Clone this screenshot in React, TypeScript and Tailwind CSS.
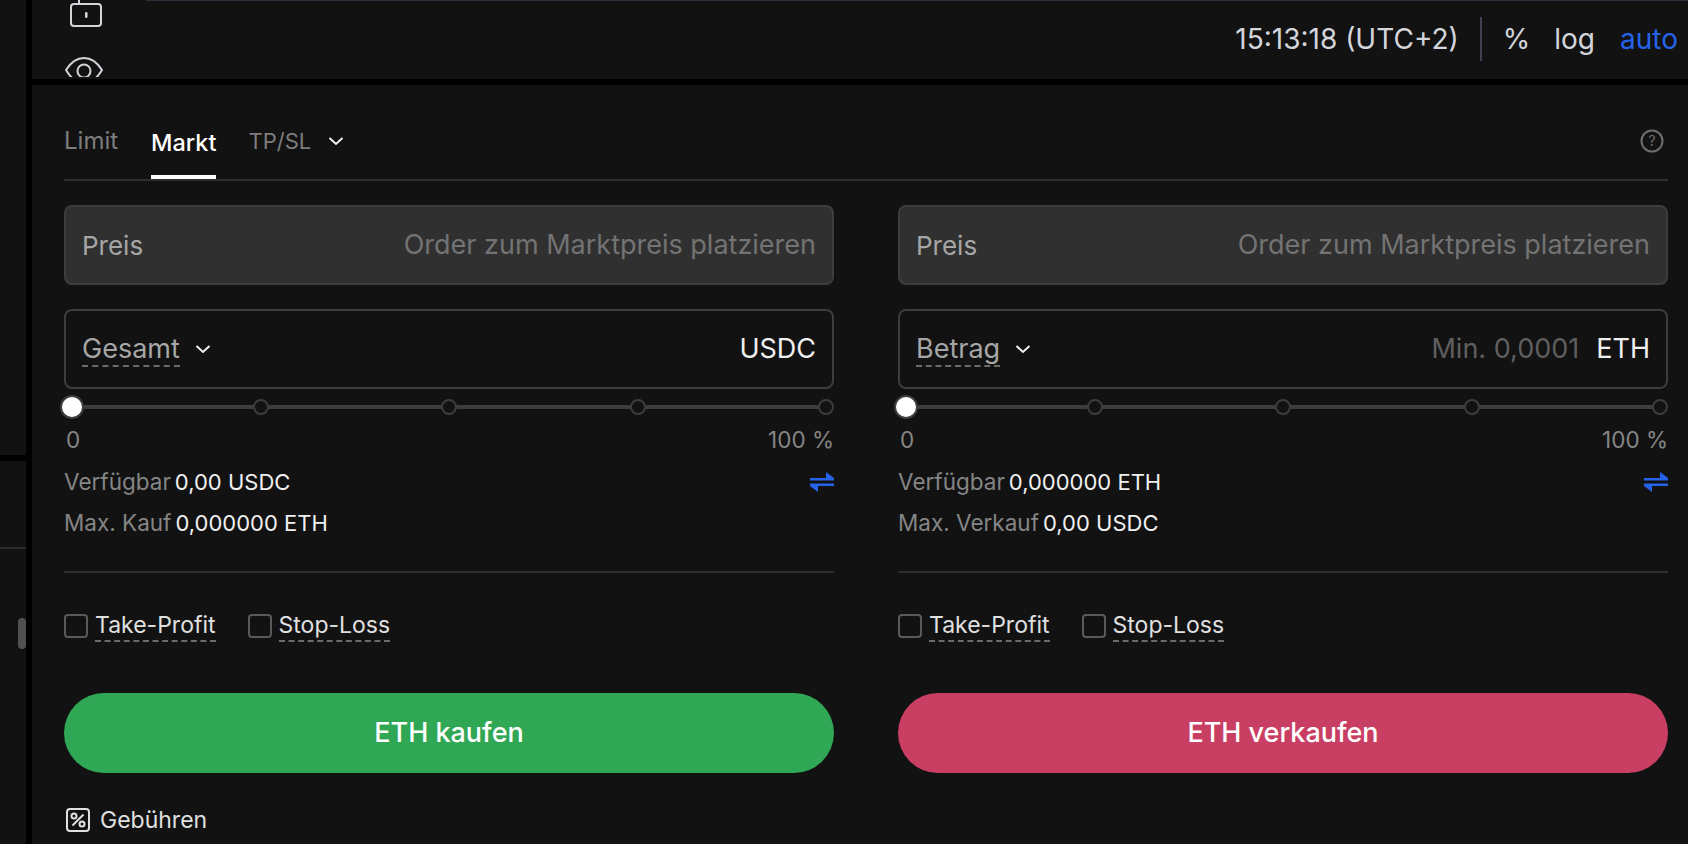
const font = { fontFamily: 'Inter, sans-serif' };

const Chevron = () => (
  <svg width="16" height="10" viewBox="0 0 16 10" fill="none" className="shrink-0">
    <path d="M1.5 2 L8 8 L14.5 2" stroke="#f0f0f0" strokeWidth="2" />
  </svg>
);

const Slider = () => (
  <div className="relative h-[22px] mt-[7px] px-2 flex justify-between items-center">
    <div className="absolute left-2 right-2 top-[9px] h-1 bg-[#3d3d3d]" />
    <div className="relative w-0 flex justify-center">
      <div className="w-6 h-6 shrink-0 rounded-full bg-white border-2 border-[#3d3d3d]" />
    </div>
    {[1, 2, 3, 4].map((i) => (
      <div key={i} className="relative w-0 flex justify-center">
        <div className="w-4 h-4 shrink-0 rounded-full bg-[#121212] border-2 border-[#3d3d3d]" />
      </div>
    ))}
  </div>
);

const Check = ({ label }: { label: string }) => (
  <div className="flex items-center gap-[7px]">
    <div className="w-6 h-6 rounded-[4px] border-2 border-[#5a5a5a]" />
    <span className="text-[#e0e0e0] text-[23px] leading-[30px] border-b-2 border-dashed border-[#6b6b6b]">{label}</span>
  </div>
);

const OrderColumn = ({
  field,
  unit,
  hint,
  avail,
  maxLabel,
  maxValue,
  action,
  color,
}: {
  field: string;
  unit: string;
  hint?: string;
  avail: string;
  maxLabel: string;
  maxValue: string;
  action: string;
  color: string;
}) => (
  <div className="w-[770px] flex flex-col">
    <div className="h-[80px] rounded-lg bg-[#303030] border-2 border-[#3d3d3d] px-[16px] flex items-center justify-between text-[27px]">
      <span className="text-[#a6a6a6] text-[26px]">Preis</span>
      <span className="text-[#737373]">Order zum Marktpreis platzieren</span>
    </div>
    <div className="h-[80px] mt-[24px] rounded-lg border-2 border-[#3d3d3d] px-[16px] flex items-center justify-between text-[27px]">
      <div className="flex items-center gap-[15px]">
        <span className="text-[#a6a6a6] leading-[33px] border-b-2 border-dashed border-[#6b6b6b]">{field}</span>
        <Chevron />
      </div>
      <div className="flex items-center gap-[17px]">
        {hint && <span className="text-[#5f5f5f]">{hint}</span>}
        <span className="text-[#f0f0f0]">{unit}</span>
      </div>
    </div>
    <Slider />
    <div className="flex justify-between mt-[7px] pl-[2px] text-[22.5px] leading-[30px] text-[#858585]">
      <span>0</span>
      <span>100 %</span>
    </div>
    <div className="flex items-center justify-between mt-[12px] text-[22.5px] leading-[30px]">
      <div className="flex items-baseline gap-[4px]">
        <span className="text-[#858585]">Verfügbar</span>
        <span className="text-[#f0f0f0] text-[22px]">{avail}</span>
      </div>
      <svg width="24" height="20" viewBox="0 0 24 20" fill="#2563eb">
        <path d="M0 6h24v2.4H0zM16 0l8 6h-8zM0 11.6h24V14H0zM8 20l-8-6h8z" />
      </svg>
    </div>
    <div className="flex items-baseline gap-[4px] mt-[11px] text-[22.5px] leading-[30px]">
      <span className="text-[#858585]">{maxLabel}</span>
      <span className="text-[#f0f0f0] text-[22px]">{maxValue}</span>
    </div>
    <div className="h-[2px] bg-[#2e2e2e] mt-[33px]" />
    <div className="flex gap-[32px] mt-[37px]">
      <Check label="Take-Profit" />
      <Check label="Stop-Loss" />
    </div>
    <button className={`h-[80px] mt-[51px] rounded-full text-white text-[27px] font-medium ${color}`}>{action}</button>
  </div>
);

export default function App() {
  return (
    <div className="w-[1688px] h-[844px] bg-black flex overflow-hidden" style={font}>
      <div className="w-[26px] h-full mr-[6px] flex flex-col gap-[6px]">
        <div className="h-[455px] bg-[#121212]" />
        <div className="flex-1 bg-[#121212] relative">
          <div className="h-[2px] mt-[86px] bg-[#2a2a2a]" />
          <div className="absolute left-[18px] top-[157px] w-2 h-[31px] rounded bg-[#505050]" />
        </div>
      </div>
      <div className="flex-1 flex flex-col gap-[6px]">
        <div className="h-[79px] bg-[#121212] flex overflow-hidden">
          <div className="w-[114px] h-[77px] overflow-hidden pl-[33px] flex flex-col items-start">
            <svg width="40" height="27" viewBox="0 0 40 27" fill="none" stroke="#d4d6dc" strokeWidth="2" className="shrink-0">
              <path d="M14 0v3" />
              <rect x="6" y="4" width="30" height="22" rx="3" />
              <rect x="20" y="12" width="2.5" height="6" rx="1.2" fill="#d4d6dc" stroke="none" />
            </svg>
            <svg width="40" height="30" viewBox="0 0 40 30" fill="none" stroke="#d4d6dc" strokeWidth="2" className="shrink-0 mt-[29px]">
              <path d="M1 14 C6 6 12 2 19 2 C26 2 32 6 37 14 C32 22 26 28 19 28 C12 28 6 22 1 14Z" />
              <circle cx="19" cy="15" r="6.5" />
            </svg>
          </div>
          <div className="flex-1 flex flex-col">
            <div className="h-[1px] bg-[#2a2d3a]" />
            <div className="flex-1 flex items-center justify-end pr-[10px] pb-[2px] text-[28px] text-[#d4d6dc]">
              <span>15:13:18 (UTC+2)</span>
              <div className="w-[2px] h-[44px] bg-[#3f4150] mx-[21px]" />
              <span>%</span>
              <span className="ml-[24px]">log</span>
              <span className="ml-[25px] text-[#2563eb]">auto</span>
            </div>
          </div>
        </div>
        <div className="flex-1 bg-[#121212] pl-[32px] pr-[20px] pt-[40px]">
          <div className="h-[56px] flex items-start border-b-2 border-[#2e2e2e] text-[24px]">
            <span className="text-[#7d7d7d] leading-[32px]">Limit</span>
            <div className="ml-[33px] h-[54px] border-b-4 border-white">
              <span className="text-white text-[23.5px] font-medium leading-[32px]">Markt</span>
            </div>
            <span className="ml-[32px] text-[#7d7d7d] text-[22px] leading-[32px]">TP/SL</span>
            <div className="ml-[17px] mt-[11px]">
              <Chevron />
            </div>
            <svg width="24" height="24" viewBox="0 0 24 24" fill="none" className="ml-auto mt-[4px] mr-[4px]">
              <circle cx="12" cy="12" r="10.5" stroke="#6f6f6f" strokeWidth="2" />
              <text x="12" y="17" textAnchor="middle" fontSize="14" fill="#6f6f6f">?</text>
            </svg>
          </div>
          <div className="flex justify-between mt-[24px]">
            <OrderColumn
              field="Gesamt"
              unit="USDC"
              avail="0,00 USDC"
              maxLabel="Max. Kauf"
              maxValue="0,000000 ETH"
              action="ETH kaufen"
              color="bg-[#2fa754]"
            />
            <OrderColumn
              field="Betrag"
              unit="ETH"
              hint="Min. 0,0001"
              avail="0,000000 ETH"
              maxLabel="Max. Verkauf"
              maxValue="0,00 USDC"
              action="ETH verkaufen"
              color="bg-[#c93f63]"
            />
          </div>
          <div className="flex items-center gap-[10px] mt-[30px] ml-[2px] text-[23px] text-[#e0e0e0]">
            <svg width="24" height="24" viewBox="0 0 24 24" fill="none" stroke="#e0e0e0" strokeWidth="2">
              <rect x="1" y="1" width="22" height="22" rx="3" />
              <path d="M17.5 6.5 L6.5 17.5" />
              <circle cx="8" cy="8" r="2.5" />
              <circle cx="16" cy="16" r="2.5" />
            </svg>
            <span>Gebühren</span>
          </div>
        </div>
      </div>
    </div>
  );
}
